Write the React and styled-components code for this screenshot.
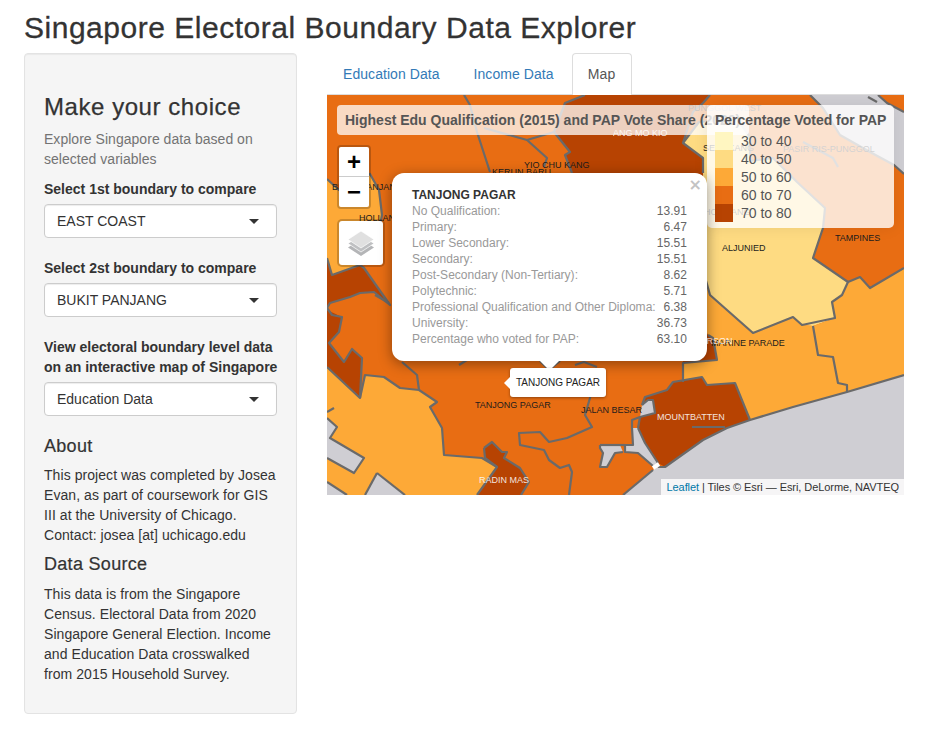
import React from "react";
import styled, { createGlobalStyle } from "styled-components";

const Global = createGlobalStyle`
  html, body { margin: 0; padding: 0; background: #fff; }
  body { font-family: "Liberation Sans", Arial, sans-serif; font-size: 14px; line-height: 20px; color: #333; }
  * { box-sizing: border-box; }
`;
const Page = styled.div`width: 931px; height: 731px; padding: 0 24px; overflow: hidden;`;
const Title = styled.h2`font-size: 30px; font-weight: 400; line-height: 33px; margin: 11px 0 9px; color: #333; letter-spacing: .52px; -webkit-text-stroke: .3px #333; white-space: nowrap;`;
const Columns = styled.div`display: flex; gap: 30px; align-items: flex-start;`;
const Sidebar = styled.form`width: 273px; height: 661px; padding: 19px; background: #f5f5f5; border: 1px solid #e3e3e3; border-radius: 4px; box-shadow: inset 0 1px 1px rgba(0,0,0,.05);`;
const SideTitle = styled.h3`font-size: 24px; font-weight: 400; line-height: 26px; margin: 21px 0 9px; color: #333; letter-spacing: .56px; -webkit-text-stroke: .25px #333;`;
const Help = styled.p`margin: 0 0 10px; color: #737373; font-size: 14px; letter-spacing: .03px;`;
const Field = styled.div`margin-bottom: 20px;`;
const Label = styled.label`display: block; font-weight: 700; margin-bottom: 5px; white-space: nowrap;`;
const Select = styled.div`height: 34px; background: #fff; border: 1px solid #ccc; border-radius: 4px; padding: 0 12px; display: flex; align-items: center; justify-content: space-between; color: #333; box-shadow: inset 0 1px 1px rgba(0,0,0,.075);`;
const Caret = styled.span`width: 0; height: 0; border-style: solid; border-width: 5px 5px 0; border-color: #333 transparent transparent; margin-right: 5px;`;
const SubTitle = styled.h4`font-size: 18px; font-weight: 400; line-height: 20px; margin: 0 0 ${p => p.$after}px; color: #333; letter-spacing: .3px; -webkit-text-stroke: .2px #333;`;
const Para = styled.p`margin: 0 0 9px; letter-spacing: .06px;`;
const Main = styled.div`width: 577px;`;
const Tabs = styled.ul`list-style: none; margin: 0; padding: 0; display: flex; gap: 2px; height: 42px; border-bottom: 1px solid #ddd;`;
const Tab = styled.li`height: 42px; padding: 10px 15px; letter-spacing: ${p => p.$active ? ".25px" : ".06px"}; color: ${p => p.$active ? "#555" : "#337ab7"}; background: ${p => p.$active ? "#fff" : "transparent"}; border: 1px solid ${p => p.$active ? "#ddd" : "transparent"}; border-bottom: 0; border-radius: 4px 4px 0 0;`;
const MapBox = styled.div`position: relative; width: 577px; height: 400px; overflow: hidden; background: #e86d13;`;
const MapSvg = styled.svg`display: block; position: absolute; inset: 0;`;
const Place = styled.span`position: absolute; left: ${p => p.$x}px; top: ${p => p.$y}px; font-size: 9px; line-height: 10px; white-space: nowrap; color: ${p => p.$light ? "#fff" : "#1c1c1c"}; opacity: ${p => p.$light ? .85 : 1};`;
const MapTitle = styled.div`position: absolute; left: 10px; top: 10px; width: 412px; height: 30px; padding: 5px 8px; background: rgba(255,255,255,.75); border-radius: 4px; font-size: 14px; font-weight: 700; color: #555; white-space: nowrap; overflow: hidden;`;
const Legend = styled.div`position: absolute; left: 380px; top: 10px; width: 187px; height: 123px; padding: 6px 8px; background: rgba(255,255,255,.8); border-radius: 5px; box-shadow: 0 0 15px rgba(0,0,0,.08); color: #555; font-size: 14px;`;
const LegendTitle = styled.div`font-weight: 700; line-height: 19px; margin-bottom: 2px; white-space: nowrap;`;
const LegendRow = styled.div`display: flex; align-items: center; gap: 8px; height: 18px; line-height: 18px;`;
const Swatch = styled.i`display: block; width: 18px; height: 18px; background: ${p => p.$c};`;
const ZoomBar = styled.div`position: absolute; left: 10px; top: 50px; width: 34px; border: 2px solid rgba(0,0,0,.2); border-radius: 4px; background-clip: padding-box;`;
const ZoomButton = styled.div`height: 30px; background: #fff; color: #000; display: flex; align-items: center; justify-content: center; font: 700 24px/30px "Liberation Sans", Arial, sans-serif; border-bottom: ${p => p.$line ? "1px solid #ccc" : "0"}; border-radius: ${p => p.$line ? "2px 2px 0 0" : "0 0 2px 2px"};`;
const Layers = styled.div`position: absolute; left: 10px; top: 124px; width: 48px; height: 48px; border: 2px solid rgba(0,0,0,.2); border-radius: 5px; background: #fff; background-clip: padding-box; display: flex; align-items: center; justify-content: center;`;
const Popup = styled.div`position: absolute; left: 65px; top: 78px; width: 315px; height: 188px; padding: 14px 20px; background: #fff; border-radius: 12px; box-shadow: 0 3px 14px rgba(0,0,0,.4); font-size: 12px; line-height: 16px;`;
const PopupHead = styled.div`font-weight: 700; color: #333;`;
const PopupRow = styled.div`display: flex; justify-content: space-between; color: #999; white-space: nowrap; letter-spacing: .02px;`;
const PopupValue = styled.span`color: #666; text-align: right;`;
const Close = styled.span`position: absolute; right: 5px; top: 5px; font: 700 16px/14px Tahoma, "DejaVu Sans", sans-serif; color: #c3c3c3;`;
const Tip = styled.div`position: absolute; left: 214px; top: 255px; width: 17px; height: 17px; background: #fff; transform: rotate(45deg);`;
const Tooltip = styled.div`position: absolute; left: 183px; top: 273px; height: 29px; width: 96px; background: #fff; border-radius: 3px; box-shadow: 0 1px 3px rgba(0,0,0,.4); font-size: 10px; line-height: 29px; color: #222; text-align: center; white-space: nowrap; &::before { content: ""; position: absolute; left: -6px; top: 9px; border: 6px solid transparent; border-left: 0; border-right-color: #fff; }`;
const Attribution = styled.div`position: absolute; right: 0; bottom: 0; height: 16px; padding: 0 5px; background: rgba(255,255,255,.8); font-size: 11px; line-height: 16px; color: #333; white-space: nowrap; letter-spacing: -.07px;`;
const AttrLink = styled.a`color: #0078a8; text-decoration: none;`;

const C = { y: "#fff6c1", l: "#fedb82", o: "#fda937", m: "#e86d13", d: "#b74302", g: "#cfced3" };

const polys = [
  // NE water
  [C.g, "483,0 551,0 560,8 577,17 577,79 567,70 543,57 513,40 496,13"],
  // dark north
  [C.d, "258,0 383,0 376,8 366,17 356,48 376,63 376,110 245,110 245,78 238,60 243,57 227,37 238,8"],
  // yellow Sengkang and Aljunied
  [C.l, "356,48 372,27 410,24 423,42 423,66 446,63 470,87 498,113 496,133 486,163 521,187 515,200 505,207 508,223 486,231 475,230 466,222 426,238 383,200 376,175 376,63"],
  // light orange Marine Parade block
  [C.o, "376,175 383,200 426,238 466,222 475,230 486,231 491,260 506,262 511,288 520,290 520,297 423,325 408,288 380,290 375,282 356,287 356,268 390,265 386,243 376,238"],
  [C.d, "360,200 381,240 386,243 390,265 356,268"],
  // light orange east
  [C.o, "486,231 508,223 505,207 515,200 521,187 533,182 543,193 577,173 577,280 520,297 520,290 511,288 506,262 491,260"],
  // west
  [C.o, "0,84 12,95 43,79 52,95 55,120 50,145 37,170 33,170 5,180 0,163"],
  [C.d, "0,163 5,180 33,170 37,173 63,210 47,197 33,198 23,202 3,208 0,213"],
  [C.d, "0,215 15,222 12,237 2,248 17,267 25,254 35,263 33,303 0,272"],
  [C.o, "0,272 33,303 38,280 57,282 73,293 92,295 110,307 103,312 115,333 117,360 155,363 170,372 150,400 0,400"],
  [C.g, "0,323 10,332 3,343 37,363 27,378 0,363"],
  [C.g, "50,378 78,400 38,400"],
  [C.g, "0,387 20,400 0,400"],
  [C.d, "157,353 165,347 175,357 180,357 177,363 193,373 202,387 194,400 150,400 170,372 158,363"],
  // coast and Kallang channel
  [C.g, "577,280 520,297 466,312 423,325 400,333 376,345 338,372 331,372 326,375 296,400 577,400"],
  [C.d, "313,322 318,302 340,295 346,287 375,282 380,290 408,288 423,325 400,333 376,345 338,372 331,368 318,348 311,333"],
  [C.g, "315,310 321,305 326,305 328,318 313,322"],
  [C.g, "305,333 311,333 318,348 331,368 326,371 311,358 298,357 298,350 306,350"],
  [C.g, "273,350 293,350 296,357 288,358 280,372 273,372 276,358 273,353"],
];
const lines = [
  "137,0 143,10 150,37 163,77",
  "157,33 200,45 227,37",
  "200,45 220,63 217,72",
  "258,0 238,8 227,37 243,57 238,60 245,78",
  "383,0 376,8 366,17 356,48 376,63 376,78",
  "356,48 372,27 410,24 423,42 423,66 446,63 470,87 498,113 496,133 486,163 521,187 533,182 543,193 577,173",
  "476,47 506,63 511,72",
  "483,0 496,13 513,40 543,57 567,70 577,79",
  "551,0 560,8 577,17",
  "541,2 550,7",
  "376,175 383,200 426,238 466,222 475,230 508,223 505,207 515,200 521,187",
  "486,231 491,260 506,262 511,288 520,290 520,297",
  "381,240 386,243 390,265 356,268 356,287",
  "0,84 12,95 43,79 52,95 55,120 50,145 37,170",
  "0,163 5,180 33,170 37,173 63,210 47,197 33,198 23,202 3,208 0,213 5,220 15,222 12,237 2,248 17,267 25,254 35,263 33,303 0,272",
  "48,200 62,208",
  "75,267 90,280 92,295",
  "33,303 38,280 57,282 73,293 92,295 110,307 103,312 115,333 117,360 155,363 170,372",
  "157,353 165,347 175,357 180,357 177,363 193,373 202,387 194,400",
  "157,353 158,363 170,372 150,400",
  "267,273 263,303 258,320 265,332 240,343 222,347 213,337 192,338 193,350 217,355 222,365 233,373 242,370 245,377 242,400",
  "132,270 140,265", "213,266 222,275 233,266", "248,270 257,267 270,272",
  "0,323 10,332 3,343 37,363 27,378 0,363", "0,317 7,313",
  "50,378 78,400", "50,378 38,400", "0,387 20,400",
  "315,310 321,305 326,305 328,318 313,322 305,325 305,333",
  "315,310 318,302 340,295 346,287 375,282 380,290 408,288 423,325",
  "311,333 318,348 331,368",
  "313,322 311,333",
  "365,332 398,332",
  "577,280 520,297 466,312 423,325 400,333 376,345 338,372 331,372",
  "326,375 296,400",
  "305,333 306,350 298,350 298,357 311,358 326,371",
  "273,350 293,350 298,350", "296,357 288,358 280,372 273,372 276,358 273,353 273,350",
];

const places = [
  [286, 33, "ANG MO KIO", true],
  [197, 65, "YIO CHU KANG"],
  [165, 72, "KERUN BARU"],
  [5, 87, "BUKIT PANJANG"],
  [32, 118, "HOLLAND-BUKIT TIMAH"],
  [361, 8, "PUNGGOL WEST"],
  [376, 48, "SENGKANG"],
  [456, 49, "PASIR RIS-PUNGGOL"],
  [377, 112, "HOUGANG"],
  [395, 148, "ALJUNIED"],
  [508, 138, "TAMPINES"],
  [148, 305, "TANJONG PAGAR"],
  [254, 310, "JALAN BESAR"],
  [330, 317, "MOUNTBATTEN", true],
  [152, 380, "RADIN MAS", true],
  [384, 243, "MARINE PARADE"],
  [341, 241, "MACPHERSON", true],
];

const rows = [
  ["No Qualification:", "13.91"], ["Primary:", "6.47"], ["Lower Secondary:", "15.51"], ["Secondary:", "15.51"],
  ["Post-Secondary (Non-Tertiary):", "8.62"], ["Polytechnic:", "5.71"], ["Professional Qualification and Other Diploma:", "6.38"],
  ["University:", "36.73"], ["Percentage who voted for PAP:", "63.10"],
];
const legend = [["30 to 40", C.y], ["40 to 50", C.l], ["50 to 60", C.o], ["60 to 70", C.m], ["70 to 80", C.d]];

export default function App() {
  return (
    <Page>
      <Global />
      <Title>Singapore Electoral Boundary Data Explorer</Title>
      <Columns>
        <Sidebar>
          <SideTitle>Make your choice</SideTitle>
          <Help>Explore Singapore data based on selected variables</Help>
          <Field><Label>Select 1st boundary to compare</Label><Select>EAST COAST<Caret /></Select></Field>
          <Field><Label>Select 2st boundary to compare</Label><Select>BUKIT PANJANG<Caret /></Select></Field>
          <Field><Label>View electoral boundary level data<br />on an interactive map of Singapore</Label><Select>Education Data<Caret /></Select></Field>
          <SubTitle $after={9}>About</SubTitle>
          <Para>This project was completed by Josea Evan, as part of coursework for GIS III at the University of Chicago. Contact: josea [at] uchicago.edu</Para>
          <SubTitle $after={10}>Data Source</SubTitle>
          <Para>This data is from the Singapore Census. Electoral Data from 2020 Singapore General Election. Income and Education Data crosswalked from 2015 Household Survey.</Para>
        </Sidebar>
        <Main>
          <Tabs>
            <Tab>Education Data</Tab>
            <Tab>Income Data</Tab>
            <Tab $active>Map</Tab>
          </Tabs>
          <MapBox>
            <MapSvg width="577" height="400" viewBox="0 0 577 400">
              {polys.map(([f, p], i) => <polygon key={i} points={p} fill={f} />)}
              {lines.map((p, i) => <polyline key={i} points={p} fill="none" stroke="#6a6a6a" strokeWidth="2.2" strokeLinejoin="round" />)}
              <polyline points="326,373 332,369" fill="none" stroke="#fff" strokeWidth="4" />
            </MapSvg>
            {places.map(([x, y, t, l]) => <Place key={t} $x={x} $y={y} $light={l}>{t}</Place>)}
            <MapTitle>Highest Edu Qualification (2015) and PAP Vote Share (2020)</MapTitle>
            <Legend>
              <LegendTitle>Percentage Voted for PAP</LegendTitle>
              {legend.map(([t, c]) => <LegendRow key={t}><Swatch $c={c} />{t}</LegendRow>)}
            </Legend>
            <ZoomBar>
              <ZoomButton $line>+</ZoomButton>
              <ZoomButton>−</ZoomButton>
            </ZoomBar>
            <Layers>
              <svg width="28" height="26" viewBox="0 0 28 26">
                <path d="M14 9 L27 17.5 L14 26 L1 17.5Z" fill="#b4b5b7" />
                <path d="M14 5 L27 13.5 L14 22 L1 13.5Z" fill="#bfc0c2" stroke="#fff" strokeWidth=".7" />
                <path d="M14 1 L27 9.5 L14 18 L1 9.5Z" fill="#e0e0e0" stroke="#fff" strokeWidth=".7" />
              </svg>
            </Layers>
            <Popup>
              <PopupHead>TANJONG PAGAR</PopupHead>
              {rows.map(([a, b]) => <PopupRow key={a}><span>{a}</span><PopupValue>{b}</PopupValue></PopupRow>)}
              <Close>×</Close>
            </Popup>
            <Tip />
            <Tooltip>TANJONG PAGAR</Tooltip>
            <Attribution><AttrLink>Leaflet</AttrLink> | Tiles © Esri — Esri, DeLorme, NAVTEQ</Attribution>
          </MapBox>
        </Main>
      </Columns>
    </Page>
  );
}
